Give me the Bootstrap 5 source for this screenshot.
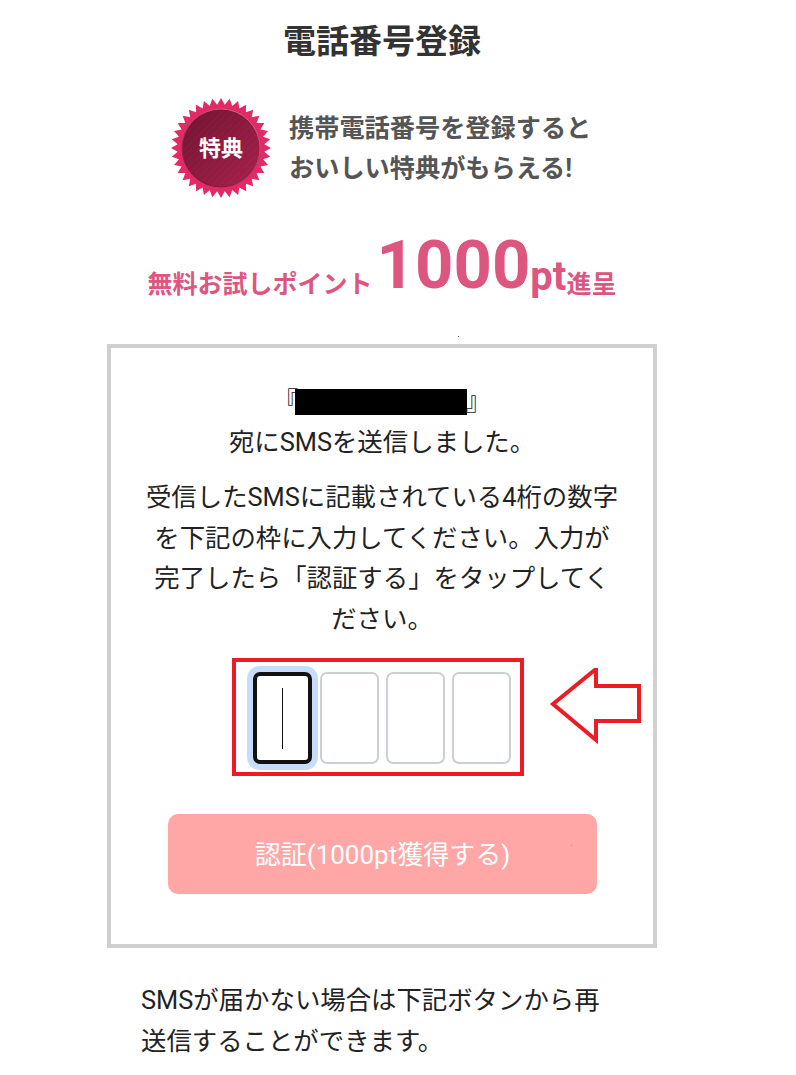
<!DOCTYPE html>
<html lang="ja">
<head>
<meta charset="utf-8">
<title>電話番号登録</title>
<link href="https://cdn.jsdelivr.net/npm/bootstrap@5.3.0/dist/css/bootstrap.min.css" rel="stylesheet">
<style>
html,body{height:1075px;overflow:hidden;background:#fff}
body{font-family:Roboto,"Noto Sans CJK JP",sans-serif;color:#222}
.sheet{width:764px;position:relative}
.page-title{font-size:33px;line-height:40px;font-weight:700;color:#333;margin:22px 0 0}
.promo{margin-top:36px;gap:18px;height:100px;padding-left:171px}
.promo-text{font-size:25.2px;line-height:40px;font-weight:700;color:#555;padding-top:2px}
.points{margin-top:26px;height:120px;font-weight:700;color:#dd5680;font-size:25px;line-height:68px;padding-top:7px;text-align:center;white-space:nowrap}
.points-big{font-size:67px;font-family:Roboto,sans-serif;margin:0 0 0 4px}
.points-unit{font-size:40px;font-family:Roboto,sans-serif;vertical-align:-2px}
.points-label{vertical-align:-5px}
.sms-box{width:550px;height:604px;margin:0 0 0 107px;border:4px solid #d0d0d0;padding-top:33px;position:relative}
.sms-text{font-size:25.4px;line-height:40.5px;text-align:center;margin:0}
.redact{display:inline-block;width:172px;height:26px;background:#000;vertical-align:-5px;margin:0 -1.4px 0 -3.4px}
.gap-para{margin-top:15px;padding:0 33px}
.otp-frame{width:292px;height:118px;border:4px solid #ed1c24;margin:19px 0 0 121px;padding:10px 0 0 17px;gap:7px;position:relative}
.otp-cell{width:59px;height:92px;padding:0;flex:none;border:2px solid #ccd0d5;border-radius:7px;background:#fff}
.otp-active{border:4px solid #111;margin-right:1px;box-shadow:0 0 0 6px #c5dcfb;background:linear-gradient(#111,#111) center/1px 61px no-repeat #fff}
.otp-active:focus{border-color:#111;box-shadow:0 0 0 6px #c5dcfb}
.arrow-mark{position:absolute;left:311px;top:6px}
.verify-btn{display:block;width:429px;height:80px;margin:38px 0 0 57px;background:#ffa6a6;border:0;border-radius:10px;color:#fff;font-size:26px;padding:3px 0 0}
.verify-btn:disabled{background:#ffa6a6;color:#fff;opacity:1}
.after-text{font-size:25.4px;line-height:41px;margin:32px 0 0 141px;width:470px}
.speck{position:absolute;width:1px;height:1px;background:#555}
</style>
</head>
<body>
<div class="sheet">
  <h1 class="page-title text-center">電話番号登録</h1>
  <div class="promo d-flex align-items-center">
    <svg width="100" height="100" viewBox="0 0 100 100">
      <defs>
        <linearGradient id="seal" x1="0" y1="0" x2="1" y2="1"><stop offset="0" stop-color="#701431"/><stop offset="1" stop-color="#a8204c"/></linearGradient>
        <linearGradient id="sealRing" x1="0.8" y1="0" x2="0.2" y2="1"><stop offset="0" stop-color="#d4698e"/><stop offset="1" stop-color="#6d1230"/></linearGradient>
        <pattern id="sealStripes" width="5" height="5" patternUnits="userSpaceOnUse" patternTransform="rotate(-45)"><rect width="5" height="1.5" fill="#fff" fill-opacity="0.02"/></pattern>
      </defs>
      <polygon id="burst" fill="#e32a66" points="50,0 50,100"/>
      <circle cx="50" cy="50" r="39" fill="url(#seal)" stroke="url(#sealRing)" stroke-width="1"/>
      <circle cx="50" cy="50" r="38" fill="url(#sealStripes)"/>
      <text x="50" y="58" text-anchor="middle" fill="#fff" font-size="22" font-weight="700" font-family="Noto Sans CJK JP, sans-serif">特典</text>
    </svg>
    <div class="promo-text">携帯電話番号を登録すると<br>おいしい特典がもらえる!</div>
  </div>
  <div class="points">
    <span class="points-label">無料お試しポイント</span><span class="points-big">1000</span><span class="points-unit">pt</span><span class="points-label">進呈</span>
  </div>
  <span class="speck" style="left:458px;top:314px"></span>
  <div class="sms-box">
    <p class="sms-text">『<span class="redact"></span>』<br>宛にSMSを送信しました。</p>
    <p class="sms-text gap-para">受信したSMSに記載されている4桁の数字を下記の枠に入力してください。入力が完了したら「認証する」をタップしてください。</p>
    <div class="otp-frame d-flex">
      <input class="otp-cell otp-active form-control" type="text" aria-label="1桁目">
      <input class="otp-cell form-control" type="text" aria-label="2桁目">
      <input class="otp-cell form-control" type="text" aria-label="3桁目">
      <input class="otp-cell form-control" type="text" aria-label="4桁目">
      <svg class="arrow-mark" width="96" height="80" viewBox="0 0 96 80" aria-hidden="true">
        <polygon points="6,36 49,1 49,18 92,18 92,53 49,53 49,72" fill="#fff" stroke="#ed1c24" stroke-width="4"/>
      </svg>
    </div>
    <button class="btn verify-btn" type="button" disabled>認証(1000pt獲得する)</button>
    <span class="speck" style="left:460px;top:497px;background:#c88"></span>
  </div>
  <p class="after-text">SMSが届かない場合は下記ボタンから再送信することができます。</p>
</div>
<script src="https://cdn.jsdelivr.net/npm/bootstrap@5.3.0/dist/js/bootstrap.bundle.min.js"></script>
<script>
var p=[],n=36;for(var i=0;i<n*2;i++){var r=i%2?43.5:50,a=Math.PI*i/n-Math.PI/2;p.push((50+r*Math.cos(a)).toFixed(2)+","+(50+r*Math.sin(a)).toFixed(2));}
document.getElementById("burst").setAttribute("points",p.join(" "));
</script>
</body>
</html>
